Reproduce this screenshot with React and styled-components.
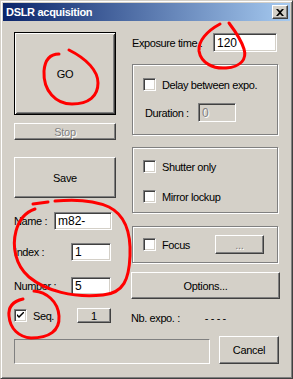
import React from "react";
import styled, { createGlobalStyle, css } from "styled-components";

const GlobalStyle = createGlobalStyle`
  html, body { margin: 0; padding: 0; background: #d4d0c8; }
  body { font-family: "Liberation Sans", Arial, sans-serif; font-size: 11px; color: #000; }
  * { box-sizing: border-box; }
`;

const raised = css`
  background: #d4d0c8;
  border: 1px solid;
  border-color: #fff #404040 #404040 #fff;
  box-shadow: inset -1px -1px #808080, inset 1px 1px #d4d0c8;
`;

const sunken = css`
  border: 1px solid;
  border-color: #808080 #fff #fff #808080;
  box-shadow: inset 1px 1px #404040, inset -1px -1px #d4d0c8;
`;

const Window = styled.div`
  position: relative;
  width: 293px;
  height: 379px;
  background: #d4d0c8;
  border: 1px solid;
  border-color: #d4d0c8 #404040 #404040 #d4d0c8;
  box-shadow: inset 1px 1px #fff, inset -1px -1px #808080;
  padding: 2px;
  display: flex;
  flex-direction: column;
`;

const TitleBar = styled.div`
  height: 18px;
  background: linear-gradient(to right, #0a246a, #a6caf0);
  display: flex;
  align-items: center;
  justify-content: space-between;
  padding: 0 2px 0 3px;
`;

const Title = styled.span`
  color: #fff;
  font-weight: bold;
  font-size: 11px;
  letter-spacing: -0.3px;
`;

const CloseButton = styled.div`
  ${raised};
  width: 16px;
  height: 14px;
  display: flex;
  align-items: center;
  justify-content: center;
`;

const Body = styled.div`
  padding: 11px 0 0 11px;
  display: flex;
  flex-direction: column;
`;

const Columns = styled.div`
  display: flex;
  gap: 15px;
  height: 293px;
`;

const Column = styled.div`
  display: flex;
  flex-direction: column;
  width: ${(p) => p.$w}px;
`;

const Button = styled.div`
  ${raised};
  height: ${(p) => p.$h}px;
  width: ${(p) => (p.$w ? `${p.$w}px` : "auto")};
  margin-top: ${(p) => p.$mt || 0}px;
  display: flex;
  align-items: center;
  justify-content: center;
  font-size: 11px;
  letter-spacing: -0.3px;
  flex-shrink: 0;
  color: ${(p) => (p.$disabled ? "#808080" : "#000")};
  text-shadow: ${(p) => (p.$disabled ? "1px 1px #fff" : "none")};
  ${(p) =>
    p.$default &&
    css`
      border: 1px solid #000;
      box-shadow: inset 1px 1px #fff, inset -1px -1px #404040, inset 2px 2px #d4d0c8, inset -2px -2px #808080;
    `}
`;

const FieldRow = styled.div`
  display: flex;
  align-items: center;
  justify-content: space-between;
  margin-top: ${(p) => p.$mt || 0}px;
  padding-right: ${(p) => p.$pr || 0}px;
  padding-left: ${(p) => p.$pl || 0}px;
  flex-shrink: 0;
`;

const Label = styled.span`
  font-size: 11px;
  letter-spacing: -0.4px;
  white-space: nowrap;
  color: ${(p) => (p.$disabled ? "#808080" : "#000")};
`;

const Input = styled.div`
  ${sunken};
  width: ${(p) => p.$w}px;
  height: ${(p) => p.$h || 18}px;
  background: ${(p) => (p.$disabled ? "#d4d0c8" : "#fff")};
  color: ${(p) => (p.$disabled ? "#808080" : "#000")};
  text-shadow: ${(p) => (p.$disabled ? "1px 1px #fff" : "none")};
  padding: 0 3px;
  display: flex;
  align-items: center;
  font-size: 12px;
`;

const Group = styled.div`
  margin-top: ${(p) => p.$mt}px;
  margin-left: 1px;
  width: 146px;
  height: ${(p) => p.$h}px;
  border: 1px solid #808080;
  box-shadow: inset 1px 1px #fff, 1px 1px #fff;
  display: flex;
  flex-direction: column;
  padding: 0 13px 0 10px;
  flex-shrink: 0;
`;

const CheckRow = styled.div`
  display: flex;
  align-items: center;
  gap: ${(p) => p.$gap || 6}px;
  margin-top: ${(p) => p.$mt || 0}px;
  height: 13px;
`;

const Box = styled.div`
  ${sunken};
  width: 13px;
  height: 13px;
  background: #fff;
  display: flex;
  align-items: center;
  justify-content: center;
  flex-shrink: 0;
`;

const SplitRow = styled.div`
  display: flex;
  align-items: center;
  justify-content: space-between;
  margin-top: ${(p) => p.$mt || 0}px;
`;

const BottomRow = styled.div`
  display: flex;
  align-items: flex-end;
  gap: 9px;
  margin-top: 11px;
`;

const StatusBox = styled.div`
  width: 196px;
  height: 25px;
  border: 1px solid;
  border-color: #808080 #fff #fff #808080;
`;

const ExpoRow = styled.div`
  display: flex;
  align-items: center;
  gap: 25px;
  margin-top: 12px;
  height: 14px;
`;

const Overlay = styled.svg`
  position: absolute;
  left: 0;
  top: 0;
  pointer-events: none;
`;

function Check({ checked }) {
  return (
    <Box>
      {checked && (
        <svg width="7" height="7" viewBox="0 0 7 7">
          <path d="M0 2 L0 4 L2 6 L7 1 L7 -1 L2 4 Z" fill="#000" />
        </svg>
      )}
    </Box>
  );
}

export default function App() {
  return (
    <>
      <GlobalStyle />
      <Window>
        <TitleBar>
          <Title>DSLR acquisition</Title>
          <CloseButton>
            <svg width="8" height="7" viewBox="0 0 8 7">
              <path d="M0 0 L2 0 L4 2 L6 0 L8 0 L5 3.5 L8 7 L6 7 L4 5 L2 7 L0 7 L3 3.5 Z" fill="#000" />
            </svg>
          </CloseButton>
        </TitleBar>
        <Body>
          <Columns>
            <Column $w={102}>
              <Button $h={83} $default>GO</Button>
              <Button $h={17} $mt={8} $disabled>Stop</Button>
              <Button $h={41} $mt={17}>Save</Button>
              <FieldRow $mt={14} $pr={4}>
                <Label>Name :</Label>
                <Input $w={58}>m82-</Input>
              </FieldRow>
              <FieldRow $mt={13} $pr={5}>
                <Label>Index :</Label>
                <Input $w={40}>1</Input>
              </FieldRow>
              <FieldRow $mt={16} $pr={5}>
                <Label>Number :</Label>
                <Input $w={40}>5</Input>
              </FieldRow>
              <FieldRow $mt={13} $pr={5}>
                <CheckRow>
                  <Check checked />
                  <Label>Seq.</Label>
                </CheckRow>
                <Button $h={15} $w={34}>1</Button>
              </FieldRow>
            </Column>
            <Column $w={149}>
              <FieldRow $mt={1} $pr={3} $pl={1}>
                <Label>Exposure time :</Label>
                <Input $w={64} $h={19}>120</Input>
              </FieldRow>
              <Group $mt={12} $h={71}>
                <CheckRow $mt={13}>
                  <Check />
                  <Label>Delay between expo.</Label>
                </CheckRow>
                <SplitRow $mt={12}>
                  <Label style={{ marginLeft: 2 }}>Duration :</Label>
                  <Input $w={38} $h={19} $disabled style={{ marginRight: 28 }}>0</Input>
                </SplitRow>
              </Group>
              <Group $mt={12} $h={66}>
                <CheckRow $mt={12}>
                  <Check />
                  <Label>Shutter only</Label>
                </CheckRow>
                <CheckRow $mt={17}>
                  <Check />
                  <Label>Mirror lockup</Label>
                </CheckRow>
              </Group>
              <Group $mt={13} $h={37}>
                <SplitRow $mt={8}>
                  <CheckRow>
                    <Check />
                    <Label>Focus</Label>
                  </CheckRow>
                  <Button $h={19} $w={49} $disabled>...</Button>
                </SplitRow>
              </Group>
              <Button $h={27} $mt={9}>Options...</Button>
              <ExpoRow>
                <Label>Nb. expo. :</Label>
                <Label>- - - -</Label>
              </ExpoRow>
            </Column>
          </Columns>
          <BottomRow>
            <StatusBox />
            <Button $h={28} $w={60}>Cancel</Button>
          </BottomRow>
        </Body>
        <Overlay width="293" height="379" viewBox="0 0 293 379">
          <g fill="none" stroke="#ff0000" strokeWidth="3" strokeLinecap="round" strokeLinejoin="round">
            <path d="M58,53 C49,53 44,58 43,70 C42,90 55,103 71,103 C88,103 97,95 97,82 C97,70 86,58 68,49" />
            <path d="M219,23 C206,30 197,40 198,50 C200,62 212,68 225,67 C240,66 246,58 243,48 C240,38 234,30 228,22" />
            <path d="M32,203 L47,201" />
            <path d="M54,200 C75,198 95,200 108,206 C124,214 130,232 129,255 C128,278 123,292 102,294 C72,297 45,290 28,276 C14,264 11,245 15,230 C18,219 25,211 34,208" />
            <path d="M33,290 C45,291 57,300 58,315 C59,330 48,337 30,337 C18,336 9,328 8,315 C7,305 13,300 22,298" />
          </g>
        </Overlay>
      </Window>
    </>
  );
}
